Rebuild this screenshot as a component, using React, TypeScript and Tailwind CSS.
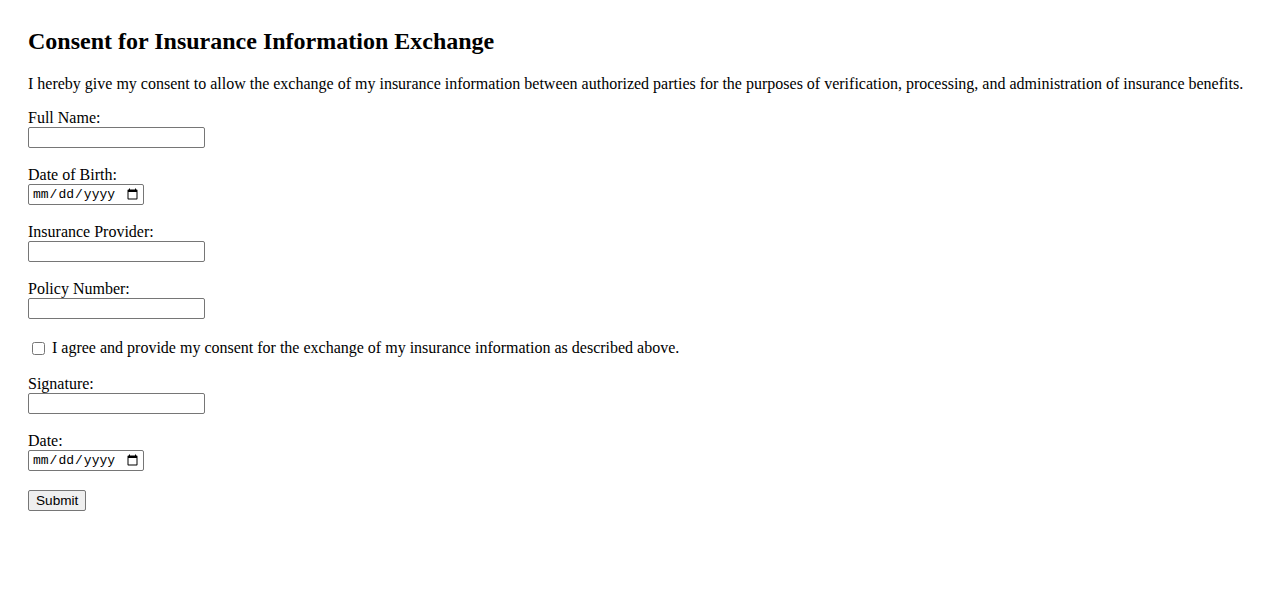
import React from "react";

const serif = "font-['Liberation_Serif','Times_New_Roman',serif]";
const textInput =
  "block w-[177px] h-[21px] border border-[#767676] rounded-[2px] bg-white px-[2px] py-[1px] text-[13.333px] font-['Liberation_Sans',Arial,sans-serif] text-black";
const dateInput =
  "block w-[116px] h-[21px] border border-[#767676] rounded-[2px] bg-white pl-[3px] pr-[2px] py-[1px] text-[13px] font-['Liberation_Mono','DejaVu_Sans_Mono',monospace] text-black";

const Field: React.FC<{ label: string; id: string; type?: string }> = ({ label, id, type = "text" }) => (
  <div className="flex flex-col mb-[19px]">
    <label htmlFor={id} className="text-[16px] leading-[15px] pb-[2px]">
      {label}
    </label>
    <input id={id} name={id} type={type} className={type === "date" ? dateInput : textInput} />
  </div>
);

export default function App() {
  return (
    <div className={`min-h-screen bg-white text-black ${serif} px-[28px] pt-[27px]`}>
      <h2 className="text-[24px] leading-[28px] font-bold">Consent for Insurance Information Exchange</h2>
      <p className="mt-[20px] text-[16px] leading-[18px]">
        I hereby give my consent to allow the exchange of my insurance information between authorized parties for the
        purposes of verification, processing, and administration of insurance benefits.
      </p>

      <form className="mt-[17px] flex flex-col items-start" onSubmit={(e) => e.preventDefault()}>
        <Field label="Full Name:" id="fullName" />
        <Field label="Date of Birth:" id="dob" type="date" />
        <Field label="Insurance Provider:" id="provider" />
        <Field label="Policy Number:" id="policy" />

        <div className="flex items-center h-[19px] mb-[19px] text-[16px]">
          <input type="checkbox" id="consent" className="w-[13px] h-[13px] ml-[4px] mr-[7px] mt-[1px]" />
          <label htmlFor="consent" className="leading-[18px]">
            I agree and provide my consent for the exchange of my insurance information as described above.
          </label>
        </div>

        <Field label="Signature:" id="signature" />
        <Field label="Date:" id="date" type="date" />

        <button
          type="submit"
          className="h-[21px] px-[7px] border border-[#767676] rounded-[2px] bg-[#efefef] text-[13.6px] leading-[17px] font-['Liberation_Sans',Arial,sans-serif] text-black"
        >
          Submit
        </button>
      </form>
    </div>
  );
}
